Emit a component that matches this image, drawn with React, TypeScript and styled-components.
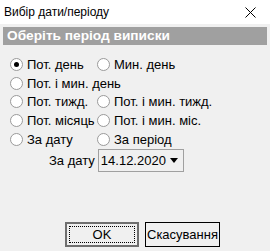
import styled, { createGlobalStyle } from "styled-components";

const GlobalStyle = createGlobalStyle`
  html, body {
    margin: 0;
    padding: 0;
    background: #f0f0f0;
  }
  body {
    font-family: "Liberation Sans", Arial, sans-serif;
    color: #000;
  }
`;

const options: { label: string; checked?: boolean; wide?: boolean }[][] = [
  [{ label: "Пот. день", checked: true }, { label: "Мин. день" }],
  [{ label: "Пот. і мин. день", wide: true }],
  [{ label: "Пот. тижд." }, { label: "Пот. і мин. тижд." }],
  [{ label: "Пот. місяць" }, { label: "Пот. і мин. міс." }],
  [{ label: "За дату" }, { label: "За період" }],
];

export default function App() {
  return (
    <>
      <GlobalStyle />
      <Window>
        <TitleBar>
          <Title>Вибір дати/періоду</Title>
          <Close>
            <svg width="11" height="11" viewBox="0 0 11 11">
              <path d="M0.5 0.5 L10.5 10.5 M10.5 0.5 L0.5 10.5" stroke="#000" strokeWidth="1" />
            </svg>
          </Close>
        </TitleBar>
        <Body>
          <Header>Оберіть період виписки</Header>
          <Options>
            {options.map((row, i) => (
              <Row key={i}>
                {row.map((o) => (
                  <Option key={o.label} $wide={o.wide}>
                    <Radio $checked={o.checked} />
                    {o.label}
                  </Option>
                ))}
              </Row>
            ))}
          </Options>
          <DateRow>
            <DateLabel>За дату</DateLabel>
            <DateBox>
              14.12.2020
              <Arrow />
            </DateBox>
          </DateRow>
          <Buttons>
            <Button $default>
              <Focus>OK</Focus>
            </Button>
            <Button>Скасування</Button>
          </Buttons>
        </Body>
      </Window>
    </>
  );
}

const Window = styled.div`
  width: 270px;
  height: 251px;
  display: flex;
  flex-direction: column;
  background: #f0f0f0;
  overflow: hidden;
`;

const TitleBar = styled.div`
  height: 24px;
  background: #fff;
  display: flex;
  align-items: center;
  justify-content: space-between;
  padding: 0 14px 0 4px;
`;

const Title = styled.span`
  font-family: "Liberation Sans", Arial, sans-serif;
  font-size: 12px;
`;

const Close = styled.span`
  display: flex;
  margin-top: 1px;
`;

const Body = styled.div`
  flex: 1;
  display: flex;
  flex-direction: column;
  padding: 3px 3px 0 3px;
`;

const Header = styled.div`
  height: 18px;
  background: #a0a0a0;
  color: #fff;
  font-weight: bold;
  font-size: 13.7px;
  line-height: 18px;
  padding-left: 4px;
`;

const Options = styled.div`
  display: flex;
  flex-direction: column;
  padding: 10px 0 0 7px;
  font-size: 13px;
`;

const Row = styled.div`
  display: flex;
  height: 18.75px;
  align-items: center;
`;

const Option = styled.label<{ $wide?: boolean }>`
  display: flex;
  align-items: center;
  gap: 4px;
  width: ${(p) => (p.$wide ? "auto" : "87px")};
  white-space: nowrap;
`;

const Radio = styled.span<{ $checked?: boolean }>`
  box-sizing: border-box;
  width: 13px;
  height: 13px;
  border-radius: 50%;
  border: 1px solid #9a9a9a;
  background: #fff;
  position: relative;
  flex: none;
  &::after {
    content: "";
    display: ${(p) => (p.$checked ? "block" : "none")};
    position: absolute;
    left: 3px;
    top: 3px;
    width: 5px;
    height: 5px;
    border-radius: 50%;
    background: #000;
  }
`;

const DateRow = styled.div`
  display: flex;
  align-items: center;
  gap: 3px;
  padding-left: 46px;
  font-size: 13px;
`;

const DateLabel = styled.span``;

const DateBox = styled.div`
  box-sizing: border-box;
  width: 86px;
  height: 23px;
  border: 1px solid #a0a0a0;
  background: #f0f0f0;
  display: flex;
  align-items: center;
  justify-content: space-between;
  padding: 0 5px 0 2px;
  font-size: 13px;
`;

const Arrow = styled.span`
  width: 0;
  height: 0;
  border-left: 4.5px solid transparent;
  border-right: 4.5px solid transparent;
  border-top: 5px solid #000;
  margin-top: 1px;
`;

const Buttons = styled.div`
  display: flex;
  gap: 6px;
  margin-top: 50px;
  padding-left: 62px;
  font-size: 13px;
`;

const Button = styled.div<{ $default?: boolean }>`
  box-sizing: border-box;
  width: ${(p) => (p.$default ? "74px" : "75px")};
  height: 25px;
  background: #f0f0f0;
  border: ${(p) => (p.$default ? "2px solid #6f6f6f" : "1px solid #000")};
  display: flex;
  align-items: center;
  justify-content: center;
  padding: ${(p) => (p.$default ? "2px" : "0")};
`;

const Focus = styled.span`
  flex: 1;
  align-self: stretch;
  display: flex;
  align-items: center;
  justify-content: center;
  border: 1px dotted #000;
`;
